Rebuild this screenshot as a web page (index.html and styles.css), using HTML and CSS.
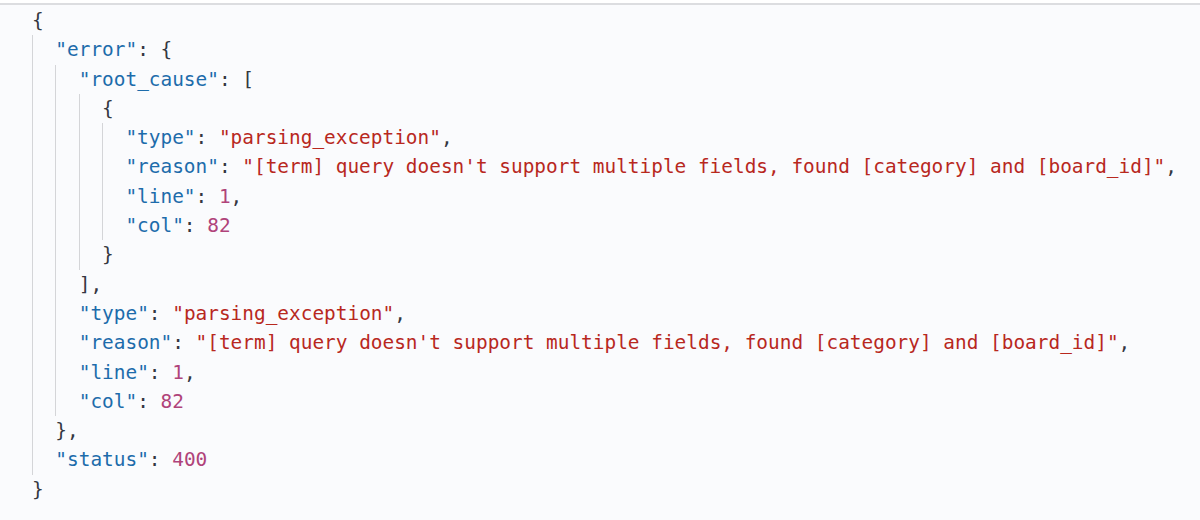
FILE: index.html
```html
<!DOCTYPE html>
<html>
<head>
<meta charset="utf-8">
<link rel="stylesheet" href="styles.css">
</head>
<body>
<div class="topbar"></div>
<div class="code">
  <div class="line"><span class="p">{</span></div>
  <div class="block">
    <div class="line"><span class="k">"error"</span><span class="p">: {</span></div>
    <div class="block">
      <div class="line"><span class="k">"root_cause"</span><span class="p">: [</span></div>
      <div class="block">
        <div class="line"><span class="p">{</span></div>
        <div class="block">
          <div class="line"><span class="k">"type"</span><span class="p">: </span><span class="s">"parsing_exception"</span><span class="p">,</span></div>
          <div class="line"><span class="k">"reason"</span><span class="p">: </span><span class="s">"[term] query doesn't support multiple fields, found [category] and [board_id]"</span><span class="p">,</span></div>
          <div class="line"><span class="k">"line"</span><span class="p">: </span><span class="n">1</span><span class="p">,</span></div>
          <div class="line"><span class="k">"col"</span><span class="p">: </span><span class="n">82</span></div>
        </div>
        <div class="line"><span class="p">}</span></div>
      </div>
      <div class="line"><span class="p">],</span></div>
      <div class="line"><span class="k">"type"</span><span class="p">: </span><span class="s">"parsing_exception"</span><span class="p">,</span></div>
      <div class="line"><span class="k">"reason"</span><span class="p">: </span><span class="s">"[term] query doesn't support multiple fields, found [category] and [board_id]"</span><span class="p">,</span></div>
      <div class="line"><span class="k">"line"</span><span class="p">: </span><span class="n">1</span><span class="p">,</span></div>
      <div class="line"><span class="k">"col"</span><span class="p">: </span><span class="n">82</span></div>
    </div>
    <div class="line"><span class="p">},</span></div>
    <div class="line"><span class="k">"status"</span><span class="p">: </span><span class="n">400</span></div>
  </div>
  <div class="line"><span class="p">}</span></div>
</div>
</body>
</html>
```

FILE: styles.css
```css
html, body {
  margin: 0;
  padding: 0;
  background: #fafbfd;
}
.topbar {
  height: 3px;
  background: #ffffff;
  border-bottom: 2px solid #dcdde0;
}
.code {
  font-family: "DejaVu Sans Mono", "Liberation Mono", monospace;
  font-size: 19.42px;
  line-height: 29.3px;
  padding-top: 1px;
  padding-left: 32px;
  color: #343741;
}
.block {
  border-left: 1px solid #d4d5d8;
  padding-left: calc(2ch - 1px);
}
.line {
  height: 29.3px;
  white-space: pre;
}
.p { color: #343741; }
.k { color: #1d6cab; }
.s { color: #b8281e; }
.n { color: #b0437a; }
```
